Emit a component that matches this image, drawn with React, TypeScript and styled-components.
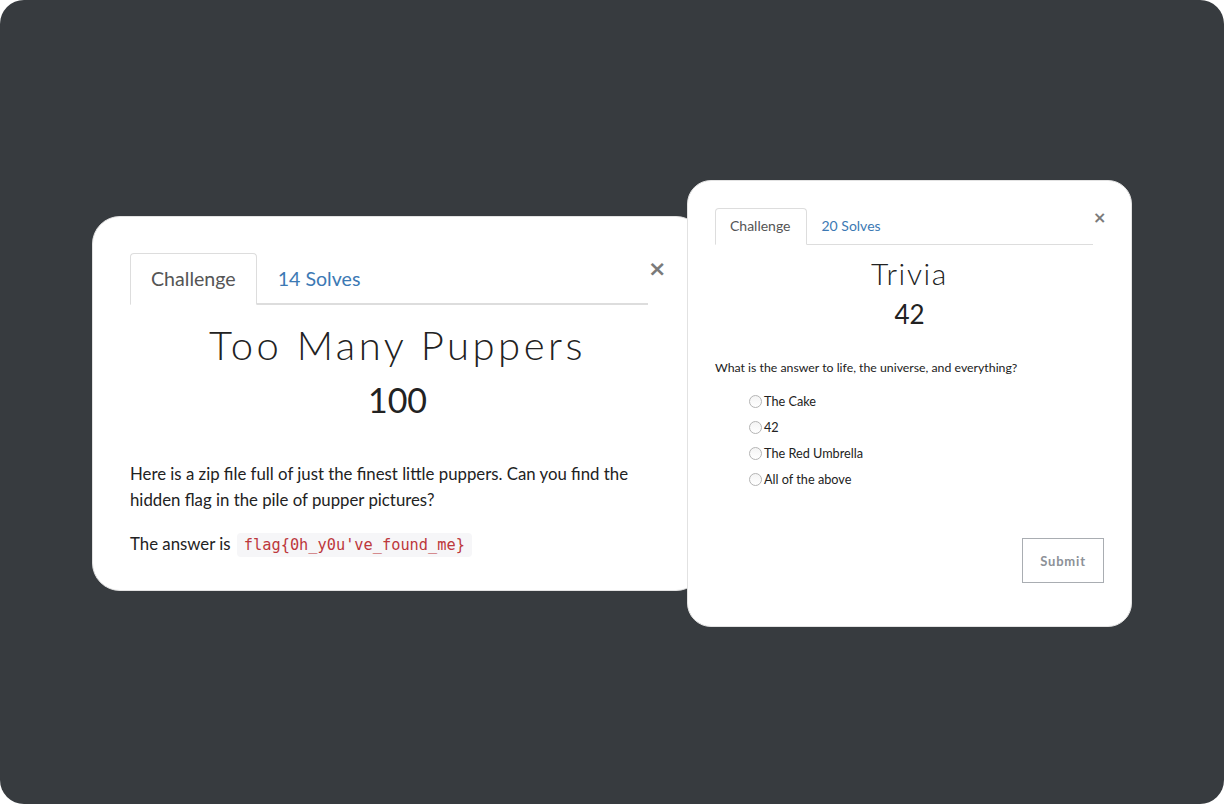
import React from "react";
import styled, { createGlobalStyle } from "styled-components";

const Global = createGlobalStyle`
  html, body {
    margin: 0;
    padding: 0;
    background: #ffffff;
  }
  body {
    font-family: Lato, "Open Sans", sans-serif;
    -webkit-font-smoothing: antialiased;
  }
  * { box-sizing: border-box; }
`;

const Stage = styled.div`
  position: relative;
  width: 1224px;
  height: 804px;
  background: #373b3f;
  border-radius: 24px;
  overflow: hidden;
`;

type Size = "lg" | "sm";

/* Two modal windows floating over the dark backdrop; the small one overlaps the large one. */
const Card = styled.section<{ $size: Size }>`
  position: absolute;
  display: flex;
  flex-direction: column;
  background: #ffffff;
  border: 1px solid #e2e2e2;
  ${({ $size }) =>
    $size === "lg"
      ? `
    left: 92px;
    top: 216px;
    width: 612px;
    height: 375px;
    border-radius: 28px;
    padding: 36px 38px 0 37px;
  `
      : `
    left: 687px;
    top: 180px;
    width: 445px;
    height: 447px;
    border-radius: 24px;
    padding: 27px 27px 0 27px;
  `}
`;

const Header = styled.div`
  display: flex;
  align-items: flex-start;
`;

const Tabs = styled.nav<{ $size: Size }>`
  flex: 1;
  display: flex;
  align-items: flex-end;
  border-bottom: ${({ $size }) => ($size === "lg" ? "2px" : "1px")} solid #dddddd;
`;

const Tab = styled.a<{ $size: Size; $active?: boolean }>`
  display: flex;
  align-items: center;
  margin-bottom: ${({ $size }) => ($size === "lg" ? "-2px" : "-1px")};
  font-family: Lato, sans-serif;
  text-decoration: none;
  border: 1px solid ${({ $active }) => ($active ? "#dddddd" : "transparent")};
  border-bottom-color: ${({ $active }) => ($active ? "#ffffff" : "transparent")};
  border-radius: 4px 4px 0 0;
  color: ${({ $active }) => ($active ? "#555555" : "#3c79b4")};
  background: ${({ $active }) => ($active ? "#ffffff" : "transparent")};
  ${({ $size }) =>
    $size === "lg"
      ? `
    height: 52px;
    padding: 0 20px 2px 20px;
    font-size: 19.6px;
  `
      : `
    height: 37px;
    padding: 0 15px 2px 14px;
    font-size: 14px;
  `}
`;

const Close = styled.button<{ $size: Size }>`
  flex: none;
  border: none;
  background: none;
  padding: 0;
  color: #7a7a7a;
  font-family: "DejaVu Sans", sans-serif;
  font-weight: 700;
  line-height: 1;
  text-align: right;
  ${({ $size }) =>
    $size === "lg"
      ? `
    width: 17px;
    margin-top: 5px;
    font-size: 22px;
  `
      : `
    width: 11px;
    margin-top: 2px;
    font-size: 16px;
  `}
`;

const Title = styled.h3<{ $size: Size }>`
  margin: 0;
  text-align: center;
  font-family: Lato, sans-serif;
  font-weight: 300;
  color: #222222;
  ${({ $size }) =>
    $size === "lg"
      ? `
    margin-top: 16px;
    font-size: 40px;
    letter-spacing: 3.5px;
    line-height: 48px;
  `
      : `
    margin-top: 10px;
    font-size: 30px;
    letter-spacing: 1.6px;
    line-height: 36px;
  `}
`;

const Points = styled.div<{ $size: Size }>`
  text-align: center;
  font-family: Lato, sans-serif;
  font-weight: 400;
  color: #222222;
  ${({ $size }) =>
    $size === "lg"
      ? `
    margin-top: 11px;
    font-size: 34px;
    line-height: 40px;
  `
      : `
    margin-top: 8px;
    font-size: 26px;
    line-height: 30px;
  `}
`;

const Description = styled.div`
  margin-top: 41px;
  font-size: 16.8px;
  line-height: 26px;
  color: #222222;
  width: 516px;
`;

const Paragraph = styled.p`
  margin: 0 0 18px 0;
`;

const Code = styled.code`
  display: inline-block;
  margin-left: 2px;
  padding: 0 7px;
  line-height: 24px;
  font-family: "DejaVu Sans Mono", monospace;
  font-size: 15.3px;
  color: #bd383c;
  background: #f6f6f8;
  border-radius: 4px;
`;

const Question = styled.p`
  margin: 30px 0 0 0;
  font-size: 12.3px;
  line-height: 18px;
  color: #222222;
`;

const Options = styled.div`
  display: flex;
  flex-direction: column;
  gap: 8px;
  margin: 15px 0 0 34px;
`;

const Option = styled.label`
  display: flex;
  align-items: center;
  height: 18px;
  font-size: 12.7px;
  color: #222222;
`;

const Radio = styled.input`
  appearance: none;
  width: 13px;
  height: 13px;
  margin: 1px 2px 0 0;
  border-radius: 50%;
  border: 1px solid #b4b4b4;
  background: linear-gradient(#f4f4f4, #ffffff);
`;

const Footer = styled.div`
  display: flex;
  justify-content: flex-end;
  margin-top: 50px;
`;

const SubmitButton = styled.button`
  width: 82px;
  height: 45px;
  border: 1px solid #a9adb2;
  background: #ffffff;
  color: #8c9197;
  font-family: Lato, sans-serif;
  font-weight: 700;
  font-size: 13px;
  letter-spacing: 0.8px;
  padding: 0;
`;

const options = ["The Cake", "42", "The Red Umbrella", "All of the above"];

export default function App() {
  return (
    <>
      <Global />
      <Stage>
        <Card $size="lg">
          <Header>
            <Tabs $size="lg">
              <Tab $size="lg" $active>
                Challenge
              </Tab>
              <Tab $size="lg">14 Solves</Tab>
            </Tabs>
            <Close $size="lg">×</Close>
          </Header>
          <Title $size="lg">Too Many Puppers</Title>
          <Points $size="lg">100</Points>
          <Description>
            <Paragraph>
              Here is a zip file full of just the finest little puppers. Can you
              find the hidden flag in the pile of pupper pictures?
            </Paragraph>
            <Paragraph>
              The answer is <Code>flag{"{"}0h_y0u've_found_me{"}"}</Code>
            </Paragraph>
          </Description>
        </Card>

        <Card $size="sm">
          <Header>
            <Tabs $size="sm">
              <Tab $size="sm" $active>
                Challenge
              </Tab>
              <Tab $size="sm">20 Solves</Tab>
            </Tabs>
            <Close $size="sm">×</Close>
          </Header>
          <Title $size="sm">Trivia</Title>
          <Points $size="sm">42</Points>
          <Question>What is the answer to life, the universe, and everything?</Question>
          <Options>
            {options.map((o) => (
              <Option key={o}>
                <Radio type="radio" name="trivia" />
                {o}
              </Option>
            ))}
          </Options>
          <Footer>
            <SubmitButton>Submit</SubmitButton>
          </Footer>
        </Card>
      </Stage>
    </>
  );
}
